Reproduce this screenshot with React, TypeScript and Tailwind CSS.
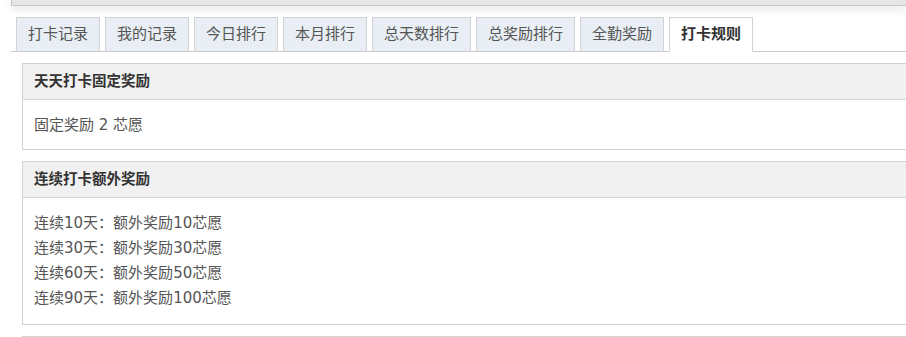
import React from 'react'

const TABS = ['打卡记录', '我的记录', '今日排行', '本月排行', '总天数排行', '总奖励排行', '全勤奖励', '打卡规则']
const ACTIVE = '打卡规则'

const STREAKS = [
  { days: 10, reward: 10 },
  { days: 30, reward: 30 },
  { days: 60, reward: 50 },
  { days: 90, reward: 100 },
]

function Panel({ title, children, bodyClass = 'pt-[13px] pb-[11px]' }: { title: string; children?: React.ReactNode; bodyClass?: string }) {
  return (
    <div className="w-[920px] border border-[#d2d2d2] bg-white">
      <div className="h-[36px] flex items-center pl-[11px] bg-[#f1f1f1] border-b border-[#cfdbe3] text-[14.5px] font-bold text-[#333]">
        {title}
      </div>
      <div className={`pl-[11px] text-[15px] leading-[25px] text-[#555] ${bodyClass}`}>{children}</div>
    </div>
  )
}

export default function App() {
  return (
    <div
      className="w-screen h-screen overflow-hidden bg-white"
      style={{ fontFamily: '"DejaVu Sans", "Noto Sans CJK SC", sans-serif' }}
    >
      {/* top bar */}
      <div className="ml-[11px] h-[6px] bg-[#e6e6e6] border-l border-b border-[#c9c9c9] shadow-[0_3px_8px_rgba(0,0,0,0.12)]" />

      {/* tabs */}
      <div className="mt-[11px] ml-[11px] flex items-end gap-[5px] pl-[5px] border-b border-[#c9c9c9]">
        {TABS.map((t) => (
          <div
            key={t}
            className={`h-[35px] -mb-px flex items-center px-[11px] border border-[#d3d3d3] text-[15px] ${
              t === ACTIVE
                ? 'bg-white border-b-white font-bold text-[#333]'
                : 'bg-[#e8eef3] border-b-[#c9c9c9] text-[#555]'
            }`}
          >
            {t}
          </div>
        ))}
      </div>

      {/* content */}
      <div className="ml-[22px] mt-[11px] flex flex-col gap-[11px]">
        <Panel title="天天打卡固定奖励">固定奖励 2 芯愿</Panel>
        <Panel title="连续打卡额外奖励" bodyClass="pt-[13px] pb-[13px]">
          {STREAKS.map((s) => (
            <div key={s.days}>
              连续{s.days}天：额外奖励{s.reward}芯愿
            </div>
          ))}
        </Panel>
        <div className="w-[920px] h-[40px] border-t border-[#d2d2d2]" />
      </div>
    </div>
  )
}
